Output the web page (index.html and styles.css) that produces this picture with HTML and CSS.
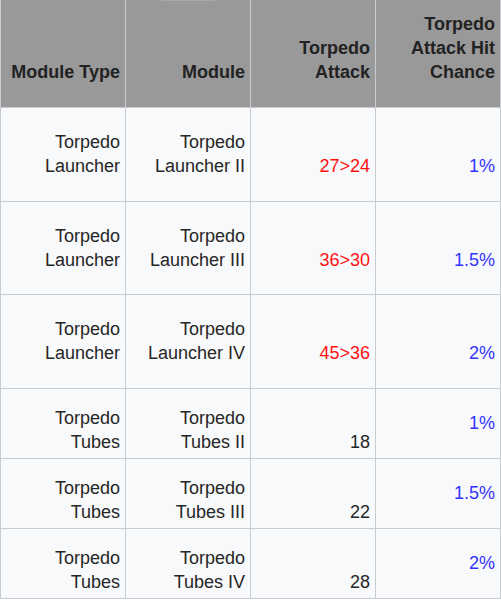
FILE: index.html
```html
<!DOCTYPE html>
<html>
<head>
<meta charset="utf-8">
<link rel="stylesheet" href="styles.css">
</head>
<body>
<table class="stats">
  <colgroup><col class="c"><col class="c"><col class="c"><col class="c"></colgroup>
  <thead>
    <tr>
      <th>Module Type</th>
      <th class="has-mark"><span class="mark"></span>Module</th>
      <th>Torpedo<br>Attack</th>
      <th>Torpedo<br>Attack Hit<br>Chance</th>
    </tr>
  </thead>
  <tbody>
    <tr class="tall">
      <td>Torpedo<br>Launcher</td>
      <td>Torpedo<br>Launcher II</td>
      <td class="red">27&gt;24</td>
      <td class="blue">1%</td>
    </tr>
    <tr class="tall tight">
      <td>Torpedo<br>Launcher</td>
      <td>Torpedo<br>Launcher III</td>
      <td class="red">36&gt;30</td>
      <td class="blue">1.5%</td>
    </tr>
    <tr class="tall">
      <td>Torpedo<br>Launcher</td>
      <td>Torpedo<br>Launcher IV</td>
      <td class="red">45&gt;36</td>
      <td class="blue">2%</td>
    </tr>
    <tr class="short">
      <td>Torpedo<br>Tubes</td>
      <td>Torpedo<br>Tubes II</td>
      <td>18</td>
      <td class="blue mid">1%</td>
    </tr>
    <tr class="short">
      <td>Torpedo<br>Tubes</td>
      <td>Torpedo<br>Tubes III</td>
      <td>22</td>
      <td class="blue mid">1.5%</td>
    </tr>
    <tr class="short">
      <td>Torpedo<br>Tubes</td>
      <td>Torpedo<br>Tubes IV</td>
      <td>28</td>
      <td class="blue mid">2%</td>
    </tr>
  </tbody>
</table>
</body>
</html>
```
FILE: styles.css
```css
html, body {
  margin: 0;
  padding: 0;
  background: #ffffff;
}
body {
  font-family: "Liberation Sans", Arial, sans-serif;
  font-size: 18px;
  color: #262626;
}
.stats {
  border-collapse: collapse;
  table-layout: fixed;
  width: 501px;
  background: #f8f9fa;
}
.stats col.c {
  width: 125px;
}
.stats th,
.stats td {
  border: 1px solid #c8ccd1;
  text-align: right;
  vertical-align: bottom;
  line-height: 24px;
  padding: 0 5px 0 4px;
}
.stats th {
  background: #999999;
  font-weight: bold;
  color: #222222;
  border-top: 0;
  padding-top: 12px;
  padding-bottom: 23px;
}
.stats th.has-mark {
  position: relative;
}
.stats .mark {
  position: absolute;
  top: 0;
  left: 35px;
  width: 54px;
  height: 1px;
  background: #a9a9a9;
}
.stats tr.tall td {
  padding-top: 22px;
  padding-bottom: 23px;
}
.stats tr.tall.tight td {
  padding-top: 22px;
  padding-bottom: 22px;
}
.stats tr.short td {
  padding-top: 17px;
  padding-bottom: 4px;
}
.stats tr.short td.mid {
  vertical-align: middle;
  padding-top: 10px;
  padding-bottom: 11px;
}
.red {
  color: #ff1111;
}
.blue {
  color: #3333ff;
}
```
